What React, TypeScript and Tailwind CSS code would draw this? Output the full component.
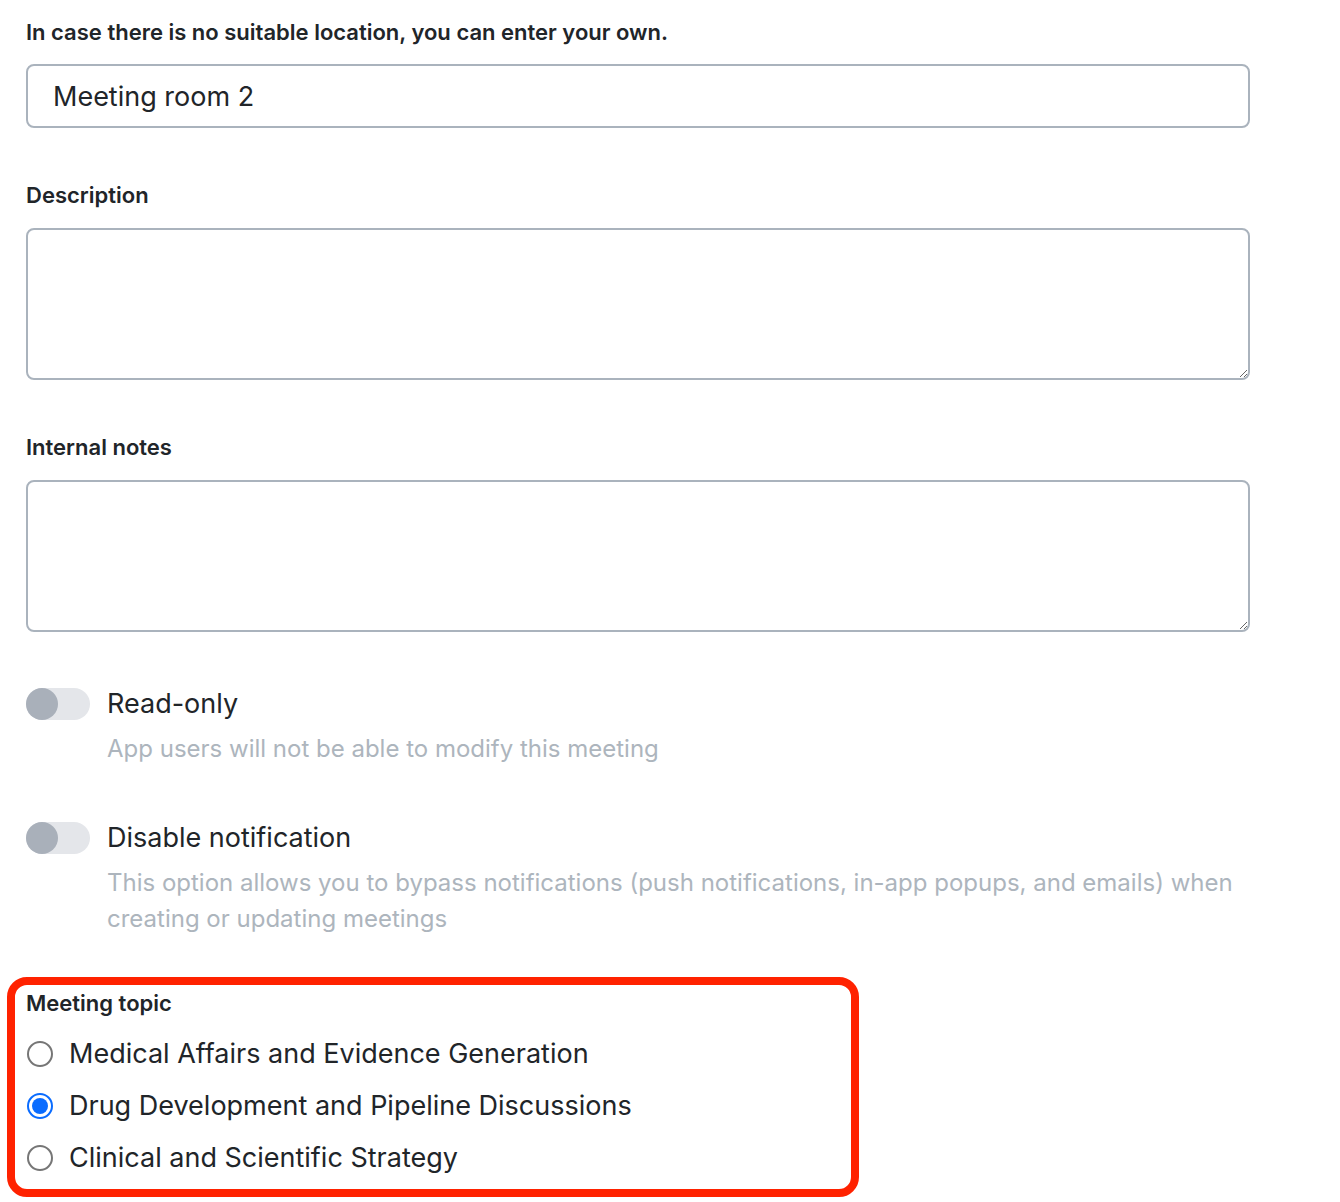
import { useState } from 'react'

const topics = [
  'Medical Affairs and Evidence Generation',
  'Drug Development and Pipeline Discussions',
  'Clinical and Scientific Strategy',
]

function Toggle({ label, hint }: { label: string; hint: string }) {
  const [on, setOn] = useState(false)
  return (
    <div className="flex gap-[17px]">
      <button
        type="button"
        onClick={() => setOn(!on)}
        className={`relative mt-[2px] h-8 w-16 shrink-0 rounded-full ${on ? 'bg-[#0a6cff]' : 'bg-[#e4e6ea]'}`}
      >
        <span
          className={`absolute top-0 h-8 w-8 rounded-full ${on ? 'left-8 bg-white' : 'left-0 bg-[#a9b0ba]'}`}
        />
      </button>
      <div className="flex flex-col">
        <span className="text-[27px] leading-[36px] text-[#212529]">{label}</span>
        <span className="mt-[9px] text-[24px] leading-[36px] text-[#adb5bd]">{hint}</span>
      </div>
    </div>
  )
}

export default function App() {
  const [location, setLocation] = useState('Meeting room 2')
  const [topic, setTopic] = useState(1)

  return (
    <div className="min-h-screen bg-white px-[26px] pt-[17px] pb-[5px] font-['Inter',sans-serif] text-[#212529]">
      <div className="w-[1224px]">
        <label className="block text-[22px] leading-[30px] font-semibold mb-[17px]">
          In case there is no suitable location, you can enter your own.
        </label>
        <input
          value={location}
          onChange={(e) => setLocation(e.target.value)}
          className="block h-16 w-full rounded-lg border-2 border-[#aab3bd] pl-[25px] text-[27px] text-[#212529] outline-none"
        />

        <label className="mt-[52px] mb-[18px] block text-[22px] leading-[30px] font-semibold">
          Description
        </label>
        <textarea className="block h-[152px] w-full rounded-lg border-2 border-[#aab3bd] px-[25px] py-3 text-[27px] outline-none" />

        <label className="mt-[52px] mb-[18px] block text-[22px] leading-[30px] font-semibold">
          Internal notes
        </label>
        <textarea className="block h-[152px] w-full rounded-lg border-2 border-[#aab3bd] px-[25px] py-3 text-[27px] outline-none" />

        <div className="mt-[54px]">
          <Toggle label="Read-only" hint="App users will not be able to modify this meeting" />
        </div>
        <div className="mt-[53px]">
          <Toggle
            label="Disable notification"
            hint="This option allows you to bypass notifications (push notifications, in-app popups, and emails) when creating or updating meetings"
          />
        </div>
      </div>

      {/* topic picker, outlined in red */}
      <div
        role="radiogroup"
        className="mt-[40px] -ml-[19px] w-[852px] rounded-[20px] border-[8px] border-[#ff2200] pt-[3px] pb-[5px] pl-[11px]"
      >
        <div className="text-[22px] leading-[30px] font-semibold">Meeting topic</div>
        <div className="mt-[10px] flex flex-col">
          {topics.map((t, i) => (
            <div
              key={t}
              onClick={() => setTopic(i)}
              className="flex h-[52px] cursor-pointer items-center gap-[16px]"
            >
              <span
                className={`ml-[1px] flex h-[26px] w-[26px] items-center justify-center rounded-full border-2 ${
                  topic === i ? 'border-[#0a6cff]' : 'border-[#767676]'
                }`}
              >
                {topic === i && <span className="h-[16px] w-[16px] rounded-full bg-[#0a6cff]" />}
              </span>
              <span className="text-[27px] leading-[36px] text-[#212529]">{t}</span>
            </div>
          ))}
        </div>
      </div>
    </div>
  )
}
